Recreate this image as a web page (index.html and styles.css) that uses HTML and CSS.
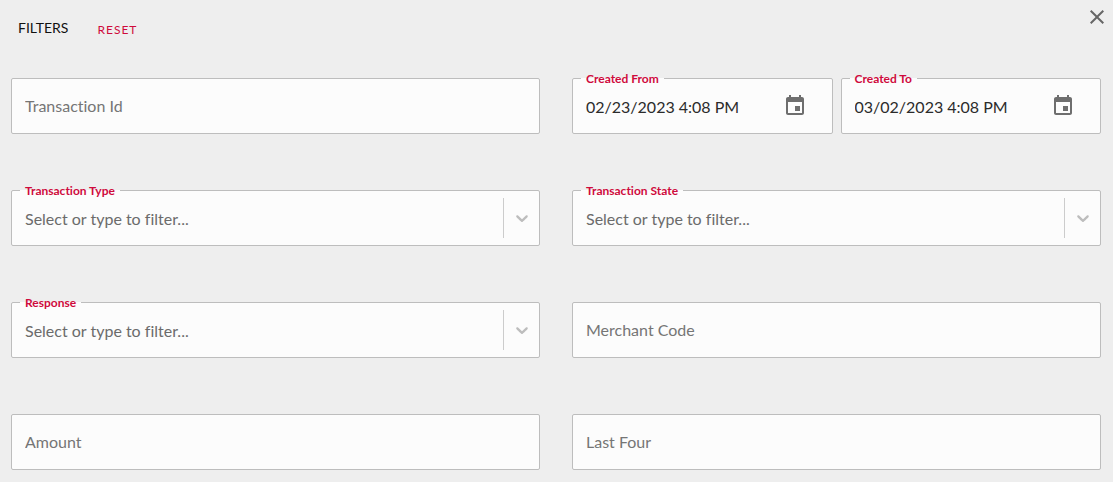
FILE: index.html
```html
<!DOCTYPE html>
<html lang="en">
<head>
<meta charset="utf-8">
<title>Filters</title>
<link rel="stylesheet" href="styles.css">
</head>
<body>
<form class="filters">
  <header class="header">
    <h1 class="title">FILTERS</h1>
    <button class="reset" type="reset">RESET</button>
    <button class="close" type="button" aria-label="Close">
      <svg viewBox="0 0 24 24" width="24" height="24"><path d="M19 6.41 17.59 5 12 10.59 6.41 5 5 6.41 10.59 12 5 17.59 6.41 19 12 13.41 17.59 19 19 17.59 13.41 12z"/></svg>
    </button>
  </header>
  <div class="grid">
    <div class="field">
      <input class="control" type="text" aria-label="Transaction Id" placeholder="Transaction Id">
    </div>
    <div class="dates">
      <div class="field">
        <label class="label" for="from">Created From</label>
        <input class="control" id="from" type="text" value="02/23/2023 4:08 PM">
        <button class="calendar" type="button" aria-label="Choose start date">
          <svg viewBox="0 0 24 24" width="24" height="24"><path d="M17 12h-5v5h5v-5zM16 1v2H8V1H6v2H5c-1.11 0-1.99.9-1.99 2L3 19c0 1.1.89 2 2 2h14c1.1 0 2-.9 2-2V5c0-1.1-.9-2-2-2h-1V1h-2zm3 18H5V8h14v11z"/></svg>
        </button>
      </div>
      <div class="field">
        <label class="label" for="to">Created To</label>
        <input class="control" id="to" type="text" value="03/02/2023 4:08 PM">
        <button class="calendar" type="button" aria-label="Choose end date">
          <svg viewBox="0 0 24 24" width="24" height="24"><path d="M17 12h-5v5h5v-5zM16 1v2H8V1H6v2H5c-1.11 0-1.99.9-1.99 2L3 19c0 1.1.89 2 2 2h14c1.1 0 2-.9 2-2V5c0-1.1-.9-2-2-2h-1V1h-2zm3 18H5V8h14v11z"/></svg>
        </button>
      </div>
    </div>
    <div class="field">
      <label class="label" for="type">Transaction Type</label>
      <select class="control select" id="type"><option>Select or type to filter...</option></select>
      <span class="arrow"><svg viewBox="0 0 20 20" width="20" height="20"><path d="M4.516 7.548c.436-.446 1.043-.481 1.576 0L10 11.295l3.908-3.747c.533-.481 1.141-.446 1.574 0 .436.445.408 1.197 0 1.615-.406.418-4.695 4.502-4.695 4.502a1.095 1.095 0 0 1-1.576 0S4.924 9.581 4.516 9.163s-.436-1.17 0-1.615z"/></svg></span>
    </div>
    <div class="field">
      <label class="label" for="state">Transaction State</label>
      <select class="control select" id="state"><option>Select or type to filter...</option></select>
      <span class="arrow"><svg viewBox="0 0 20 20" width="20" height="20"><path d="M4.516 7.548c.436-.446 1.043-.481 1.576 0L10 11.295l3.908-3.747c.533-.481 1.141-.446 1.574 0 .436.445.408 1.197 0 1.615-.406.418-4.695 4.502-4.695 4.502a1.095 1.095 0 0 1-1.576 0S4.924 9.581 4.516 9.163s-.436-1.17 0-1.615z"/></svg></span>
    </div>
    <div class="field">
      <label class="label" for="response">Response</label>
      <select class="control select" id="response"><option>Select or type to filter...</option></select>
      <span class="arrow"><svg viewBox="0 0 20 20" width="20" height="20"><path d="M4.516 7.548c.436-.446 1.043-.481 1.576 0L10 11.295l3.908-3.747c.533-.481 1.141-.446 1.574 0 .436.445.408 1.197 0 1.615-.406.418-4.695 4.502-4.695 4.502a1.095 1.095 0 0 1-1.576 0S4.924 9.581 4.516 9.163s-.436-1.17 0-1.615z"/></svg></span>
    </div>
    <div class="field">
      <input class="control" type="text" aria-label="Merchant Code" placeholder="Merchant Code">
    </div>
    <div class="field">
      <input class="control" type="text" aria-label="Amount" placeholder="Amount">
    </div>
    <div class="field">
      <input class="control" type="text" aria-label="Last Four" placeholder="Last Four">
    </div>
  </div>
</form>
</body>
</html>
```
FILE: styles.css
```css
* {
  box-sizing: border-box;
}

body {
  margin: 0;
  background: #eee;
  color: #212121;
  font-family: Lato, "Liberation Sans", sans-serif;
  font-size: 16px;
  font-variant-ligatures: none;
}

button {
  border: 0;
  padding: 0;
  background: none;
  font-family: inherit;
  cursor: pointer;
}

svg {
  display: block;
  fill: currentColor;
}

.filters {
  padding: 0 12px 12px 11px;
}

.header {
  display: flex;
  align-items: flex-start;
  gap: 29px;
  height: 78px;
  padding: 5px 0 0 7px;
}

.title {
  margin: 0;
  padding-top: 13px;
  font-size: 14px;
  line-height: 20px;
  font-weight: 400;
  color: #111;
}

.reset {
  padding-top: 15px;
  color: #cf0a3c;
  font-size: 12px;
  line-height: 20px;
  letter-spacing: 1px;
}

.close {
  margin-left: auto;
  margin-right: -8px;
  color: #666;
}

.grid {
  display: grid;
  grid-template-columns: repeat(2, minmax(0, 1fr));
  gap: 56px 32px;
}

.dates {
  display: grid;
  grid-template-columns: repeat(2, minmax(0, 1fr));
  gap: 8px;
}

.field {
  position: relative;
  display: flex;
  align-items: center;
  height: 56px;
  border: 1px solid #bdbdbd;
  border-radius: 2px;
  background: #fcfcfc;
}

.label {
  position: absolute;
  top: -8px;
  left: 8px;
  padding: 0 5px;
  background: linear-gradient(#eee 7px, #fcfcfc 7px);
  color: #cf0a3c;
  font-size: 12px;
  line-height: 16px;
  font-weight: 700;
}

.control {
  flex: 1;
  min-width: 0;
  height: 100%;
  margin: 0;
  padding: 0 13px 2px;
  border: 0;
  outline: 0;
  background: none;
  color: #2b2b2b;
  font: inherit;
  font-variant-ligatures: none;
}

.control::placeholder {
  color: #757575;
  opacity: 1;
}

.calendar {
  margin-right: 25px;
  color: #6e6e6e;
}

.dates .control {
  padding-bottom: 0;
}

.select {
  appearance: none;
  padding-bottom: 0;
  color: #6b6b6b;
}

.arrow {
  display: flex;
  align-items: center;
  height: 40px;
  padding: 0 7px 0 8px;
  border-left: 1px solid #ccc;
  color: #bdbdbd;
  pointer-events: none;
}
```
